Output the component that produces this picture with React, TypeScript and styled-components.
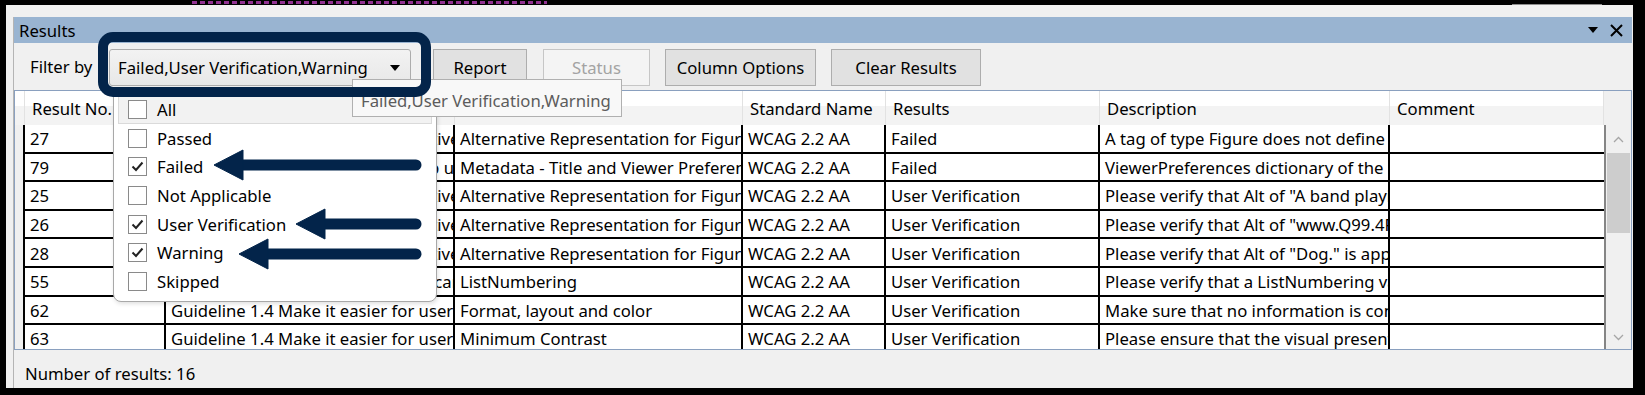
import React from 'react';
import styled, { createGlobalStyle } from 'styled-components';

const GlobalStyle = createGlobalStyle`
  html, body {
    margin: 0;
    padding: 0;
    background: #000;
  }
  body {
    font-family: 'Noto Sans', 'Segoe UI', sans-serif;
    font-size: 16.7px;
    color: #000;
  }
  * {
    box-sizing: border-box;
  }
`;

const COLS = '10px 141px 289px 288px 143px 214px 290px 214px';

const Screen = styled.div`
  width: 1645px;
  height: 395px;
  overflow: hidden;
  background: #000;
  padding: 0 12px 7px 6px;
  display: flex;
  flex-direction: column;
`;

const TopBand = styled.div`
  flex: 0 0 5px;
  display: flex;
  align-items: flex-start;
`;

const Dashes = styled.div`
  margin: 1px 0 0 186px;
  width: 355px;
  height: 3px;
  background: repeating-linear-gradient(90deg, #b43cb4 0 5px, transparent 5px 8px);
  opacity: 0.8;
`;

const Ledge = styled.div`
  margin: 4px 31px 0 auto;
  width: 90px;
  height: 1px;
  background: #8c8c8c;
`;

const Window = styled.div`
  flex: 1;
  background: #f0f0f0;
  padding: 12px 1px 0 7px;
`;

const Panel = styled.div`
  height: 100%;
  border-left: 1px solid #b4b4b4;
  display: flex;
  flex-direction: column;
`;

const TitleBar = styled.div`
  flex: 0 0 26px;
  background: #99b4d1;
  display: flex;
  align-items: center;
  justify-content: space-between;
  padding: 0 9px 0 5px;
`;

const TitleIcons = styled.div`
  display: flex;
  align-items: center;
  gap: 12px;
`;

const Toolbar = styled.div`
  flex: 0 0 47px;
  display: flex;
  align-items: flex-start;
  padding: 6px 0 0 16px;
`;

const Label = styled.div`
  width: 79px;
  height: 37px;
  line-height: 35px;
`;

const ComboWrap = styled.div`
  position: relative;
  z-index: 5;
  width: 302px;
  height: 37px;
  margin-right: 22px;
`;

const ComboBox = styled.div`
  width: 100%;
  height: 100%;
  border: 1px solid #acacac;
  border-radius: 3px;
  background: linear-gradient(#f2f2f2, #e8e8e8);
  display: flex;
  align-items: center;
  justify-content: space-between;
  padding: 0 10px 0 8px;
  white-space: nowrap;
`;

const Highlight = styled.div`
  position: absolute;
  left: -11px;
  top: -17px;
  width: 333px;
  height: 65px;
  border: 10px solid #03244a;
  border-radius: 15px;
  z-index: 3;
`;

const Popup = styled.div`
  position: absolute;
  left: 4px;
  top: 39px;
  width: 324px;
  height: 214px;
  background: #fff;
  border: 1px solid #a8a8a8;
  border-radius: 0 0 8px 8px;
  box-shadow: 1px 2px 4px rgba(0, 0, 0, 0.12);
  padding: 6px 4px;
  z-index: 1;
`;

const Item = styled.div<{ $hot?: boolean }>`
  height: 28.7px;
  display: flex;
  align-items: center;
  gap: 10px;
  padding-left: 9px;
  background: ${(p) => (p.$hot ? '#f2f2f2' : 'transparent')};
  border: 1px solid ${(p) => (p.$hot ? '#dadada' : 'transparent')};
`;

const Box = styled.span`
  width: 19px;
  height: 19px;
  border: 1px solid #8a8a8a;
  background: #fff;
  display: flex;
  align-items: center;
  justify-content: center;
`;

const Tip = styled.div`
  position: absolute;
  left: 243px;
  top: 30px;
  width: 270px;
  height: 38px;
  background: #f8f8f8;
  border: 1px solid #b0b0b0;
  color: #5c5c5c;
  padding: 4px 0 0 8px;
  display: flex;
  align-items: center;
  white-space: nowrap;
  overflow: hidden;
  z-index: 2;
`;

const Arrows = styled.svg`
  position: absolute;
  left: 91px;
  top: 90px;
  z-index: 4;
`;

const Button = styled.div<{ $w: number; $off?: boolean }>`
  width: ${(p) => p.$w}px;
  height: 37px;
  margin-right: 15px;
  border: 1px solid ${(p) => (p.$off ? '#c6c6c6' : '#adadad')};
  background: ${(p) => (p.$off ? '#f4f4f4' : '#e1e1e1')};
  color: ${(p) => (p.$off ? '#a3a3a3' : '#000')};
  display: flex;
  align-items: center;
  justify-content: center;
  white-space: nowrap;
`;

const Grid = styled.div`
  flex: 0 0 260px;
  border: 1px solid #8aa0bf;
  display: flex;
  overflow: hidden;
`;

const Table = styled.div`
  width: 1589px;
  display: flex;
  flex-direction: column;
  overflow: hidden;
`;

const HeadRow = styled.div`
  flex: 0 0 34px;
  display: grid;
  grid-template-columns: ${COLS};
  background: linear-gradient(#fff 0, #fff 45%, #f3f3f3 45%, #f3f3f3 100%);
`;

const HeadCell = styled.div`
  border-right: 1px solid #e2e2e2;
  padding-left: 7px;
  display: flex;
  align-items: center;
  white-space: nowrap;
  overflow: hidden;
`;

const Row = styled.div`
  flex: 0 0 28.6px;
  display: grid;
  grid-template-columns: ${COLS};
`;

const RowHead = styled.div`
  background: #f0f0f0;
  border-right: 2px solid #000;
`;

const Cell = styled.div<{ $last?: boolean }>`
  background: #fff;
  border-bottom: 2px solid #000;
  border-right: ${(p) => (p.$last ? 'none' : '2px solid #000')};
  padding: 1px 0 0 5px;
  display: flex;
  align-items: center;
  white-space: nowrap;
  overflow: hidden;
`;

const ScrollCol = styled.div`
  flex: 1;
  display: flex;
  flex-direction: column;
  background: #f0f0f0;
`;

const ScrollTrack = styled.div`
  margin-top: 34px;
  flex: 1;
  border-left: 2px solid #858585;
  display: flex;
  flex-direction: column;
`;

const ScrollButton = styled.div<{ $h: number }>`
  flex: 0 0 ${(p) => p.$h}px;
  display: flex;
  align-items: center;
  justify-content: center;
`;

const Thumb = styled.div`
  flex: 0 0 80px;
  margin: 0 1px;
  background: #cdcdcd;
`;

const Filler = styled.div`
  flex: 1;
`;

const StatusBar = styled.div`
  flex: 1;
  display: flex;
  align-items: center;
  padding: 9px 0 0 11px;
`;

const filters = [
  { name: 'All', on: false },
  { name: 'Passed', on: false },
  { name: 'Failed', on: true },
  { name: 'Not Applicable', on: false },
  { name: 'User Verification', on: true },
  { name: 'Warning', on: true },
  { name: 'Skipped', on: false },
];

const g11 = 'Guideline 1.1 Provide text alternatives for any non-text content';
const g24 = 'Guideline 2.4 Provide ways to help users navigate';
const g13 = 'Guideline 1.3 Create content that can be presented in different ways';
const g14 = 'Guideline 1.4 Make it easier for users to see and hear content';
const alt = 'Alternative Representation for Figures';

const results = [
  ['27', g11, alt, 'WCAG 2.2 AA', 'Failed', 'A tag of type Figure does not define an alternate description.'],
  ['79', g24, 'Metadata - Title and Viewer Preferences', 'WCAG 2.2 AA', 'Failed', 'ViewerPreferences dictionary of the Catalog does not contain DisplayDocTitle.'],
  ['25', g11, alt, 'WCAG 2.2 AA', 'User Verification', 'Please verify that Alt of "A band playing on stage." is appropriate.'],
  ['26', g11, alt, 'WCAG 2.2 AA', 'User Verification', 'Please verify that Alt of "www.Q99.4FM.com" is appropriate.'],
  ['28', g11, alt, 'WCAG 2.2 AA', 'User Verification', 'Please verify that Alt of "Dog." is appropriate.'],
  ['55', g13, 'ListNumbering', 'WCAG 2.2 AA', 'User Verification', 'Please verify that a ListNumbering value is appropriate.'],
  ['62', g14, 'Format, layout and color', 'WCAG 2.2 AA', 'User Verification', 'Make sure that no information is conveyed by color alone.'],
  ['63', g14, 'Minimum Contrast', 'WCAG 2.2 AA', 'User Verification', 'Please ensure that the visual presentation of text has sufficient contrast.'],
];

const Check = () => (
  <svg width="13" height="11" viewBox="0 0 13 11">
    <polyline points="1.5,5.5 5,9 11.5,1.5" fill="none" stroke="#222" strokeWidth="2" />
  </svg>
);

const Chevron = ({ up }: { up?: boolean }) => (
  <svg width="11" height="7" viewBox="0 0 11 7">
    <polyline
      points={up ? '1,6 5.5,1.5 10,6' : '1,1 5.5,5.5 10,1'}
      fill="none"
      stroke="#a6a6a6"
      strokeWidth="1.3"
    />
  </svg>
);

// arrow tip x/y and head base x, in the overlay's own coordinates
const arrowList = [
  { tip: 14, y: 26, base: 43 },
  { tip: 96, y: 85, base: 125 },
  { tip: 39, y: 115, base: 68 },
];

export default function App() {
  return (
    <>
      <GlobalStyle />
      <Screen>
        <TopBand>
          <Dashes />
          <Ledge />
        </TopBand>
        <Window>
          <Panel>
            <TitleBar>
              <span>Results</span>
              <TitleIcons>
                <svg width="10" height="6" viewBox="0 0 10 6">
                  <polygon points="0,0 10,0 5,6" fill="#000" />
                </svg>
                <svg width="13" height="13" viewBox="0 0 13 13">
                  <path d="M1 1 L12 12 M12 1 L1 12" stroke="#000" strokeWidth="2" />
                </svg>
              </TitleIcons>
            </TitleBar>

            <Toolbar>
              <Label>Filter by</Label>
              <ComboWrap>
                <ComboBox>
                  <span>Failed,User Verification,Warning</span>
                  <svg width="10" height="6" viewBox="0 0 10 6">
                    <polygon points="0,0 10,0 5,6" fill="#000" />
                  </svg>
                </ComboBox>
                <Popup>
                  {filters.map((f, i) => (
                    <Item key={f.name} $hot={i === 0}>
                      <Box>{f.on && <Check />}</Box>
                      <span>{f.name}</span>
                    </Item>
                  ))}
                </Popup>
                <Tip>Failed,User Verification,Warning</Tip>
                <Highlight />
                <Arrows width="240" height="140" viewBox="0 0 240 140">
                  {arrowList.map((a) => (
                    <g key={a.y} fill="#03244a" stroke="#03244a">
                      <line x1={a.base - 4} y1={a.y} x2={216} y2={a.y} strokeWidth="11" strokeLinecap="round" />
                      <polygon points={`${a.tip},${a.y} ${a.base},${a.y - 15} ${a.base},${a.y + 15}`} strokeWidth="1" />
                    </g>
                  ))}
                </Arrows>
              </ComboWrap>
              <Button $w={94} style={{ marginRight: 16 }}>Report</Button>
              <Button $w={107} $off>Status</Button>
              <Button $w={151}>Column Options</Button>
              <Button $w={150}>Clear Results</Button>
            </Toolbar>

            <Grid>
              <Table>
                <HeadRow>
                  <HeadCell />
                  <HeadCell>Result No.</HeadCell>
                  <HeadCell>Guideline</HeadCell>
                  <HeadCell>Rule Name</HeadCell>
                  <HeadCell>Standard Name</HeadCell>
                  <HeadCell>Results</HeadCell>
                  <HeadCell>Description</HeadCell>
                  <HeadCell>Comment</HeadCell>
                </HeadRow>
                {results.map((r) => (
                  <Row key={r[0]}>
                    <RowHead />
                    {r.map((c, i) => (
                      <Cell key={i}>{c}</Cell>
                    ))}
                    <Cell $last />
                  </Row>
                ))}
              </Table>
              <ScrollCol>
                <ScrollTrack>
                  <ScrollButton $h={28}>
                    <Chevron up />
                  </ScrollButton>
                  <Thumb />
                  <Filler />
                  <ScrollButton $h={24}>
                    <Chevron />
                  </ScrollButton>
                </ScrollTrack>
              </ScrollCol>
            </Grid>

            <StatusBar>Number of results: 16</StatusBar>
          </Panel>
        </Window>
      </Screen>
    </>
  );
}
